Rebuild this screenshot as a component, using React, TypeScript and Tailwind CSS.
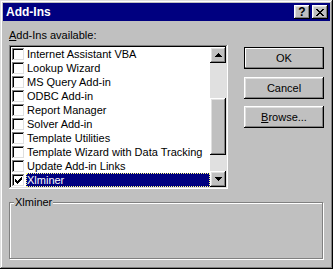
import React from "react"

const items = [
  "Internet Assistant VBA",
  "Lookup Wizard",
  "MS Query Add-in",
  "ODBC Add-in",
  "Report Manager",
  "Solver Add-in",
  "Template Utilities",
  "Template Wizard with Data Tracking",
  "Update Add-in Links",
  "Xlminer",
]

const raised =
  "shadow-[inset_-1px_-1px_#000,inset_1px_1px_#fff,inset_-2px_-2px_#808080,inset_2px_2px_#dfdfdf]"
const sunken =
  "shadow-[inset_-1px_-1px_#fff,inset_1px_1px_#808080,inset_-2px_-2px_#dfdfdf,inset_2px_2px_#000]"

function Checkbox({ checked }: { checked?: boolean }) {
  return (
    <div className={`mt-[1px] ml-[1px] flex h-[13px] w-[13px] shrink-0 items-center justify-center bg-white ${sunken}`}>
      {checked && (
        <svg width="7" height="7" viewBox="0 0 7 7" shapeRendering="crispEdges">
          <path d="M6 0h1v3h-1v1h-1v1h-1v1h-1v1h-1v-1h-1v-1h-1v-3h1v1h1v1h1v-1h1v-1h1z" fill="#000" />
        </svg>
      )}
    </div>
  )
}

function Arrow({ up }: { up?: boolean }) {
  return (
    <div className={`flex h-[16px] w-[16px] items-center justify-center bg-[#c0c0c0] ${raised}`}>
      <svg width="7" height="4" viewBox="0 0 7 4" shapeRendering="crispEdges">
        <path d={up ? "M3 0h1v1h1v1h1v1h1v1h-7v-1h1v-1h1z" : "M0 0h7v1h-1v1h-1v1h-1v1h-1v-1h-1v-1h-1z"} fill="#000" />
      </svg>
    </div>
  )
}

function DlgButton({ children, def }: { children: React.ReactNode; def?: boolean }) {
  return (
    <button
      className={`flex h-[22px] w-[80px] items-center justify-center bg-[#c0c0c0] text-[11px] text-black ${
        def ? "border border-black shadow-[inset_-1px_-1px_#808080,inset_1px_1px_#fff]" : raised
      }`}
    >
      {children}
    </button>
  )
}

export default function App() {
  return (
    <div
      className={`flex h-[269px] w-[333px] flex-col bg-[#c0c0c0] p-[3px] font-['Liberation_Sans',Arial,sans-serif] text-[11px] text-black shadow-[inset_-1px_-1px_#000,inset_1px_1px_#dfdfdf,inset_-2px_-2px_#808080,inset_2px_2px_#fff]`}
    >
      {/* title bar */}
      <div className="flex h-[18px] items-center bg-[#000080] pl-[3px] pr-[2px]">
        <span className="text-[12px] font-bold text-white">Add-Ins</span>
        <div className="ml-auto flex gap-[2px]">
          <div className={`flex h-[14px] w-[16px] items-center justify-center bg-[#c0c0c0] text-[12px] font-bold leading-none ${raised}`}>
            ?
          </div>
          <div className={`flex h-[14px] w-[16px] items-center justify-center bg-[#c0c0c0] ${raised}`}>
            <svg width="8" height="7" viewBox="0 0 8 7" shapeRendering="crispEdges">
              <path
                d="M0 0h2v1h1v1h2v-1h1v-1h2v1h-1v1h-1v1h-1v1h1v1h1v1h1v1h-2v-1h-1v-1h-2v1h-1v1h-2v-1h1v-1h1v-1h1v-1h-1v-1h-1v-1h-1z"
                fill="#000"
              />
            </svg>
          </div>
        </div>
      </div>

      <div className="flex px-[6px]">
        <div className="flex flex-col pt-[8px]">
          <div className="h-[13px] leading-[13px]">
            <span className="underline">A</span>dd-Ins available:
          </div>
          <div className={`mt-[3px] flex h-[144px] w-[219px] bg-white p-[2px] ${sunken}`}>
            <div className="flex flex-1 flex-col">
              {items.map((name, i) => {
                const sel = i === items.length - 1
                return (
                  <div key={name} className="flex h-[14px] items-start">
                    <Checkbox checked={sel} />
                    <span
                      className={`ml-[1px] h-[14px] whitespace-nowrap border leading-[12px] ${
                        sel
                          ? "flex-1 border-dotted border-[#ffff80] bg-[#000080] text-white"
                          : "border-transparent"
                      }`}
                    >
                      {name}
                    </span>
                  </div>
                )
              })}
            </div>
            <div className="flex w-[16px] flex-col">
              <Arrow up />
              <div className="h-[35px] bg-[#e0e0e0]" />
              <div className={`h-[57px] bg-[#c0c0c0] ${raised}`} />
              <div className="flex-1 bg-[#e0e0e0]" />
              <Arrow />
            </div>
          </div>
        </div>

        <div className="ml-auto flex flex-col pt-[26px]">
          <DlgButton def>OK</DlgButton>
          <div className="mt-[8px]">
            <DlgButton>Cancel</DlgButton>
          </div>
          <div className="mt-[7px]">
            <DlgButton>
              <span>
                <span className="underline">B</span>rowse...
              </span>
            </DlgButton>
          </div>
        </div>
      </div>

      <div className="relative mx-[6px] mt-[13px] h-[57px] w-[314px] border border-[#808080] shadow-[1px_1px_0_#fff,inset_1px_1px_0_#fff]">
        <span className="absolute left-[4px] top-[-7px] bg-[#c0c0c0] px-[1px] leading-[13px]">Xlminer</span>
      </div>
    </div>
  )
}
